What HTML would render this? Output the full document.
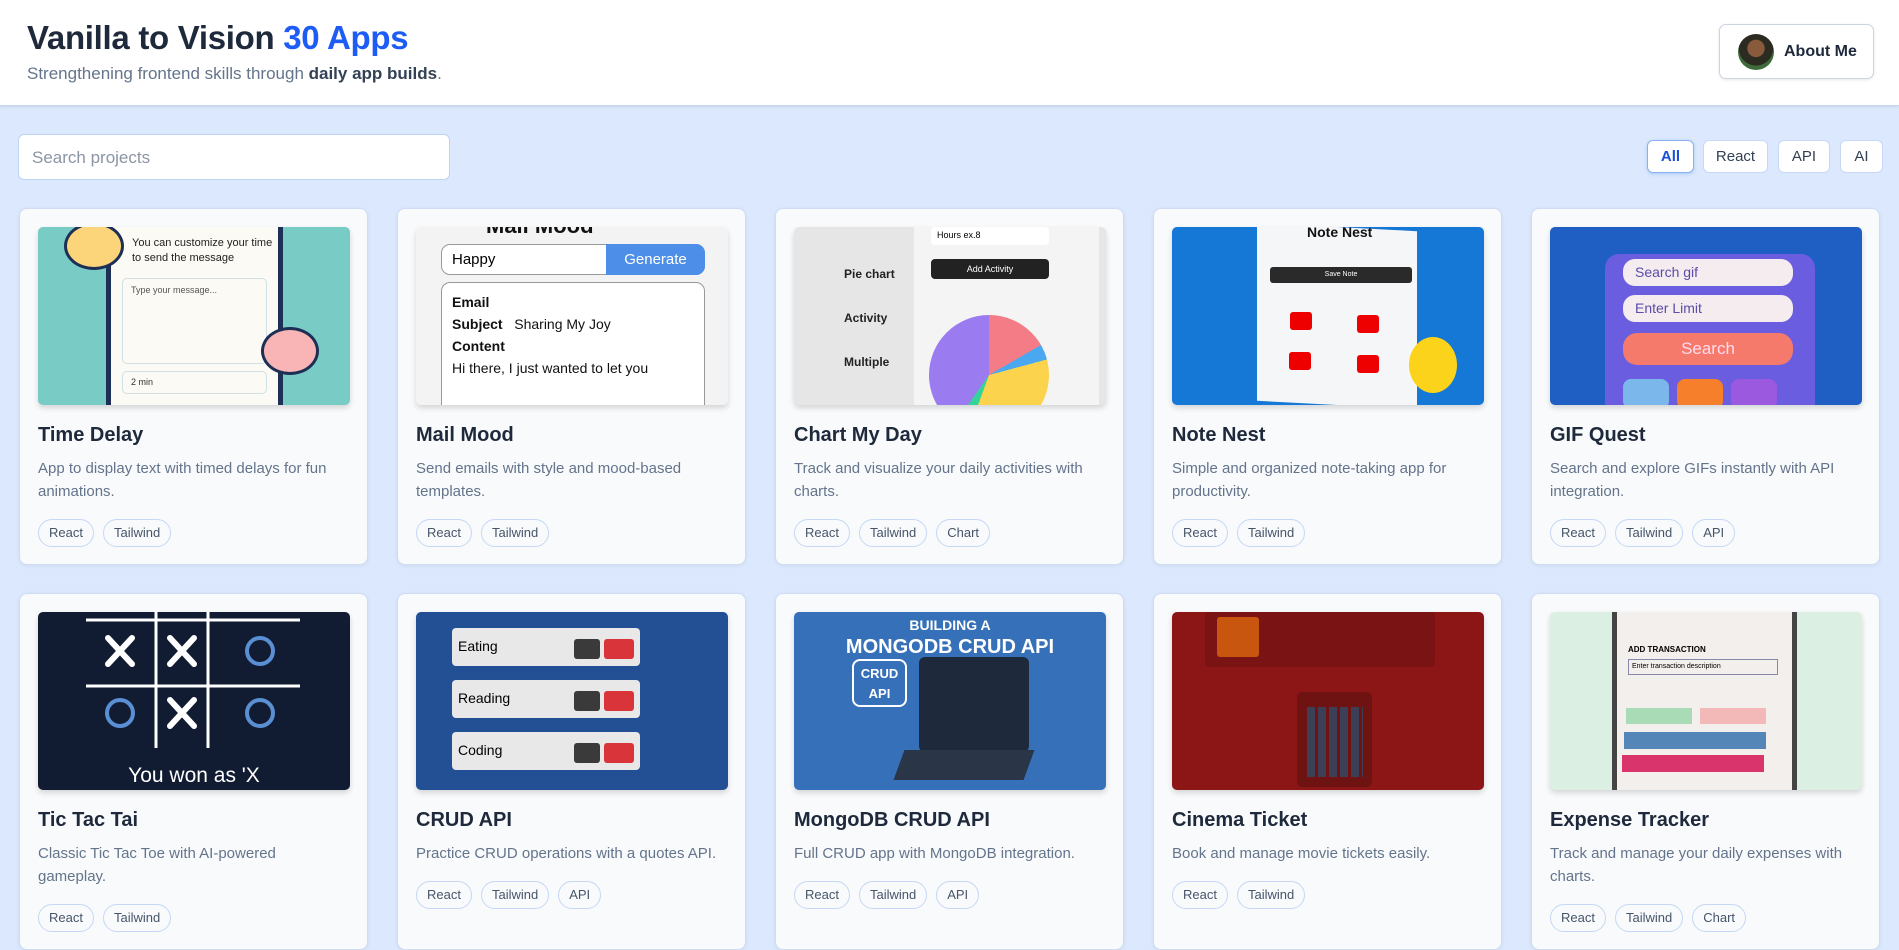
<!DOCTYPE html>
<html><head><meta charset="utf-8"><style>
*{box-sizing:border-box;margin:0;padding:0}
body{width:1899px;height:903px;overflow:hidden;background:#dbe8fd;font-family:"Liberation Sans",sans-serif;position:relative}
header{position:absolute;left:0;top:0;width:1899px;height:106px;background:#fff;border-bottom:1px solid #c7d6ee;box-shadow:0 1px 3px rgba(0,0,0,.08)}
h1{position:absolute;left:27px;top:19px;font-size:33px;font-weight:700;color:#1e293b;letter-spacing:-.3px}
h1 span{color:#1d5cf5}
.sub{position:absolute;left:27px;top:64px;font-size:17px;color:#64748b}
.sub b{color:#334155}
.about{position:absolute;left:1719px;top:24px;width:155px;height:55px;border:1px solid #cbd5e1;border-radius:7px;background:#fff;box-shadow:0 1px 3px rgba(0,0,0,.1)}
.about .av{position:absolute;left:18px;top:9px;width:36px;height:36px;border-radius:50%;background:radial-gradient(circle at 50% 40%,#8a5a3c 0 30%,#2b2b22 32% 60%,#3f6b3a 62%)}
.about span{position:absolute;left:64px;top:18px;font-size:16px;font-weight:700;color:#1e293b}
.search{position:absolute;left:18px;top:134px;width:432px;height:46px;background:#fff;border:1px solid #bfd3f5;border-radius:6px;font-size:17px;color:#8b95a5;padding:13px 13px}
.f{position:absolute;top:140px;height:33px;background:#fff;border:1px solid #c6d8f6;border-radius:6px;font-size:15px;color:#334155;text-align:center;line-height:31px}
.f.on{border-color:#8ab2f2;color:#1d4ed8;font-weight:700;box-shadow:0 1px 3px rgba(59,130,246,.3)}
.card{position:absolute;width:349px;height:357px;background:#f8fafc;border:1px solid #cfdcf3;border-radius:8px;box-shadow:0 1px 4px rgba(0,0,0,.06);overflow:hidden}
.img{position:absolute;left:18px;top:18px;width:312px;height:178px;border-radius:5px;overflow:hidden;box-shadow:0 3px 6px rgba(0,0,0,.15)}
.bd{position:absolute;left:18px;top:215px;width:312px}
.t{font-size:20px;font-weight:700;color:#1e293b;height:33px}
.d{width:310px;font-size:15px;line-height:23px;color:#64748b}
.tags{margin-top:16px;display:flex;gap:9px}
.tag{height:28px;padding:0 10px;border:1px solid #c6d8f6;border-radius:14px;font-size:13px;color:#475569;line-height:26px;background:#f8fafc}
.a{position:absolute}
</style></head><body>
<header>
<h1>Vanilla to Vision <span>30 Apps</span></h1>
<div class="sub">Strengthening frontend skills through <b>daily app builds</b>.</div>
<div class="about"><div class="av"></div><span>About Me</span></div>
</header>
<div class="search">Search projects</div>
<div class="f on" style="left:1647px;width:47px">All</div>
<div class="f" style="left:1703px;width:65px">React</div>
<div class="f" style="left:1778px;width:52px">API</div>
<div class="f" style="left:1840px;width:43px">AI</div>

<!-- Row 1 -->
<div class="card" style="left:19px;top:208px">
<div class="img" style="background:#79cbc6">
<div class="a" style="left:68px;top:0;width:177px;height:178px;background:#fbfaf4;border-left:5px solid #1e2f55;border-right:5px solid #1e2f55"></div>
<div class="a" style="left:94px;top:9px;font-size:11px;color:#222;line-height:15px">You can customize your time<br>to send the message</div>
<div class="a" style="left:84px;top:51px;width:145px;height:86px;border:1px solid #cfe0e6;border-radius:5px;font-size:9px;color:#555;padding:6px 8px">Type your message...</div>
<div class="a" style="left:84px;top:144px;width:145px;height:23px;border:1px solid #cfe0e6;border-radius:5px;font-size:9px;color:#333;padding:5px 8px">2 min</div>
<div class="a" style="left:26px;top:-5px;width:60px;height:48px;border-radius:50%;background:#fcd57a;border:3px solid #1e2f55"></div>
<div class="a" style="left:223px;top:100px;width:58px;height:48px;border-radius:50%;background:#f9b5b5;border:3px solid #1e2f55"></div>
</div>
<div class="bd"><div class="t">Time Delay</div><div class="d">App to display text with timed delays for fun animations.</div>
<div class="tags"><span class="tag">React</span><span class="tag">Tailwind</span></div></div></div>

<div class="card" style="left:397px;top:208px">
<div class="img" style="background:#f3f3f3">
<div class="a" style="left:70px;top:-14px;font-size:22px;font-weight:700;color:#111">Mail Mood</div>
<div class="a" style="left:25px;top:17px;width:264px;height:31px;border:1px solid #999;border-radius:9px;background:#fff;font-size:15px;padding:6px 10px">Happy</div>
<div class="a" style="left:190px;top:17px;width:99px;height:31px;background:#4d8fe8;border-radius:0 9px 9px 0;color:#fff;font-size:15px;text-align:center;line-height:31px">Generate</div>
<div class="a" style="left:25px;top:55px;width:264px;height:140px;border:1px solid #999;border-radius:9px;background:#fff;padding:8px 10px;font-size:14px;line-height:22px;color:#111"><b>Email</b><br><b>Subject</b> &nbsp; Sharing My Joy<br><b>Content</b><br>Hi there, I just wanted to let you</div>
</div>
<div class="bd"><div class="t">Mail Mood</div><div class="d">Send emails with style and mood-based templates.</div>
<div class="tags"><span class="tag">React</span><span class="tag">Tailwind</span></div></div></div>

<div class="card" style="left:775px;top:208px">
<div class="img" style="background:#e6e6e6">
<div class="a" style="left:120px;top:0;width:185px;height:178px;background:#f4f4f4"></div>
<div class="a" style="left:50px;top:25px;font-size:12px;font-weight:700;color:#222;line-height:44px">Pie chart<br>Activity<br>Multiple</div>
<div class="a" style="left:137px;top:0;width:118px;height:18px;background:#fff;border-radius:4px;font-size:9px;padding:3px 6px">Hours ex.8</div>
<div class="a" style="left:137px;top:32px;width:118px;height:20px;background:#222;border-radius:4px;color:#fff;font-size:9px;text-align:center;line-height:20px">Add Activity</div>
<div class="a" style="left:135px;top:88px;width:120px;height:120px;border-radius:50%;background:conic-gradient(#f47c86 0 60deg,#4aa8f0 60deg 75deg,#fcd34d 75deg 200deg,#34d399 200deg 215deg,#9b7bf0 215deg)"></div>
</div>
<div class="bd"><div class="t">Chart My Day</div><div class="d">Track and visualize your daily activities with charts.</div>
<div class="tags"><span class="tag">React</span><span class="tag">Tailwind</span><span class="tag">Chart</span></div></div></div>

<div class="card" style="left:1153px;top:208px">
<div class="img" style="background:#1578d6">
<div class="a" style="left:85px;top:0;width:160px;height:178px;background:#f5f6f8;transform:skewY(3deg)"></div>
<div class="a" style="left:135px;top:-3px;font-size:14px;font-weight:700;color:#111">Note Nest</div>
<div class="a" style="left:98px;top:40px;width:142px;height:16px;background:#2a2a2a;border-radius:3px;color:#fff;font-size:7px;text-align:center;line-height:16px">Save Note</div>
<div class="a" style="left:118px;top:85px;width:22px;height:18px;background:#e00;border-radius:3px"></div>
<div class="a" style="left:185px;top:88px;width:22px;height:18px;background:#e00;border-radius:3px"></div>
<div class="a" style="left:117px;top:125px;width:22px;height:18px;background:#e00;border-radius:3px"></div>
<div class="a" style="left:185px;top:128px;width:22px;height:18px;background:#e00;border-radius:3px"></div>
<div class="a" style="left:237px;top:110px;width:48px;height:56px;border-radius:50%;background:#fbd31a"></div>
</div>
<div class="bd"><div class="t">Note Nest</div><div class="d">Simple and organized note-taking app for productivity.</div>
<div class="tags"><span class="tag">React</span><span class="tag">Tailwind</span></div></div></div>

<div class="card" style="left:1531px;top:208px">
<div class="img" style="background:#1f5fc4">
<div class="a" style="left:55px;top:27px;width:210px;height:170px;border-radius:14px;background:#6a5de0"></div>
<div class="a" style="left:73px;top:32px;width:170px;height:27px;border-radius:12px;background:#f5ecef;color:#5a4ca8;font-size:14px;padding:5px 12px">Search gif</div>
<div class="a" style="left:73px;top:68px;width:170px;height:27px;border-radius:12px;background:#f5ecef;color:#5a4ca8;font-size:14px;padding:5px 12px">Enter Limit</div>
<div class="a" style="left:73px;top:106px;width:170px;height:32px;border-radius:14px;background:#f57a6c;color:#fde;font-size:17px;text-align:center;line-height:32px">Search</div>
<div class="a" style="left:73px;top:152px;width:46px;height:30px;border-radius:8px;background:#7cb7ec"></div>
<div class="a" style="left:127px;top:152px;width:46px;height:30px;border-radius:8px;background:#f57f2a"></div>
<div class="a" style="left:181px;top:152px;width:46px;height:30px;border-radius:8px;background:#9b59e0"></div>
</div>
<div class="bd"><div class="t">GIF Quest</div><div class="d">Search and explore GIFs instantly with API integration.</div>
<div class="tags"><span class="tag">React</span><span class="tag">Tailwind</span><span class="tag">API</span></div></div></div>

<!-- Row 2 -->
<div class="card" style="left:19px;top:593px">
<div class="img" style="background:#111c33">
<svg class="a" style="left:0;top:0" width="312" height="178"><g stroke="#fff" stroke-width="3"><line x1="48" y1="8" x2="262" y2="8"/><line x1="48" y1="74" x2="262" y2="74"/><line x1="118" y1="0" x2="118" y2="136"/><line x1="170" y1="0" x2="170" y2="136"/></g>
<g stroke="#fff" stroke-width="6" stroke-linecap="round"><path d="M70 26l24 26M94 26l-24 26M132 26l24 26M156 26l-24 26M132 88l24 26M156 88l-24 26"/></g>
<g fill="none" stroke="#5b8fd4" stroke-width="4"><circle cx="222" cy="39" r="13"/><circle cx="82" cy="101" r="13"/><circle cx="222" cy="101" r="13"/></g>
<text x="156" y="170" fill="#fff" font-family="Liberation Sans" font-size="21" text-anchor="middle">You won as 'X</text></svg>
</div>
<div class="bd"><div class="t">Tic Tac Tai</div><div class="d">Classic Tic Tac Toe with AI-powered gameplay.</div>
<div class="tags"><span class="tag">React</span><span class="tag">Tailwind</span></div></div></div>

<div class="card" style="left:397px;top:593px">
<div class="img" style="background:#234f95">
<div class="a" style="left:36px;top:16px;width:188px;height:38px;background:#e8e8e8;border-radius:4px;font-size:14px;padding:10px 6px">Eating</div>
<div class="a" style="left:36px;top:68px;width:188px;height:38px;background:#e8e8e8;border-radius:4px;font-size:14px;padding:10px 6px">Reading</div>
<div class="a" style="left:36px;top:120px;width:188px;height:38px;background:#e8e8e8;border-radius:4px;font-size:14px;padding:10px 6px">Coding</div>
<div class="a" style="left:188px;top:27px;width:30px;height:20px;background:#d9343a;border-radius:3px"></div>
<div class="a" style="left:188px;top:79px;width:30px;height:20px;background:#d9343a;border-radius:3px"></div>
<div class="a" style="left:188px;top:131px;width:30px;height:20px;background:#d9343a;border-radius:3px"></div>
<div class="a" style="left:158px;top:27px;width:26px;height:20px;background:#3a3a3a;border-radius:3px"></div>
<div class="a" style="left:158px;top:79px;width:26px;height:20px;background:#3a3a3a;border-radius:3px"></div>
<div class="a" style="left:158px;top:131px;width:26px;height:20px;background:#3a3a3a;border-radius:3px"></div>
</div>
<div class="bd"><div class="t">CRUD API</div><div class="d">Practice CRUD operations with a quotes API.</div>
<div class="tags"><span class="tag">React</span><span class="tag">Tailwind</span><span class="tag">API</span></div></div></div>

<div class="card" style="left:775px;top:593px">
<div class="img" style="background:#3570b8">
<div class="a" style="left:0;top:2px;width:312px;text-align:center;color:#fff;font-weight:700;font-size:14px;line-height:22px">BUILDING A<br><span style="font-size:20px">MONGODB CRUD API</span></div>
<div class="a" style="left:125px;top:45px;width:110px;height:95px;background:#1e2a3b;border-radius:6px"></div>
<div class="a" style="left:105px;top:138px;width:130px;height:30px;background:#2a3547;transform:skewX(-20deg)"></div>
<div class="a" style="left:58px;top:47px;width:55px;height:48px;border:2px solid #fff;border-radius:8px;color:#fff;font-weight:700;font-size:13px;text-align:center;line-height:20px;padding-top:3px">CRUD<br>API</div>
</div>
<div class="bd"><div class="t">MongoDB CRUD API</div><div class="d">Full CRUD app with MongoDB integration.</div>
<div class="tags"><span class="tag">React</span><span class="tag">Tailwind</span><span class="tag">API</span></div></div></div>

<div class="card" style="left:1153px;top:593px">
<div class="img" style="background:#8c1616">
<div class="a" style="left:33px;top:0;width:230px;height:55px;background:#7a1414;border-radius:4px"></div>
<div class="a" style="left:45px;top:5px;width:42px;height:40px;background:#c8560f;border-radius:3px"></div>
<div class="a" style="left:125px;top:80px;width:75px;height:95px;background:#6e1212;border-radius:5px"></div>
<div class="a" style="left:135px;top:95px;width:56px;height:70px;background:repeating-linear-gradient(90deg,#3c3f55 0 8px,transparent 8px 11px)"></div>
</div>
<div class="bd"><div class="t">Cinema Ticket</div><div class="d">Book and manage movie tickets easily.</div>
<div class="tags"><span class="tag">React</span><span class="tag">Tailwind</span></div></div></div>

<div class="card" style="left:1531px;top:593px">
<div class="img" style="background:#dcefe3">
<div class="a" style="left:62px;top:0;width:185px;height:178px;background:#f3efec;border-left:5px solid #444;border-right:5px solid #444"></div>
<div class="a" style="left:78px;top:33px;font-size:8px;font-weight:700">ADD TRANSACTION</div>
<div class="a" style="left:78px;top:47px;width:150px;height:16px;border:1px solid #88a;font-size:7px;padding:3px">Enter transaction description</div>
<div class="a" style="left:76px;top:96px;width:66px;height:16px;background:#a9dcb6"></div>
<div class="a" style="left:150px;top:96px;width:66px;height:16px;background:#f3b9b9"></div>
<div class="a" style="left:74px;top:120px;width:142px;height:17px;background:#5486b8"></div>
<div class="a" style="left:72px;top:143px;width:142px;height:17px;background:#d9346b"></div>
</div>
<div class="bd"><div class="t">Expense Tracker</div><div class="d">Track and manage your daily expenses with charts.</div>
<div class="tags"><span class="tag">React</span><span class="tag">Tailwind</span><span class="tag">Chart</span></div></div></div>
</body></html>
